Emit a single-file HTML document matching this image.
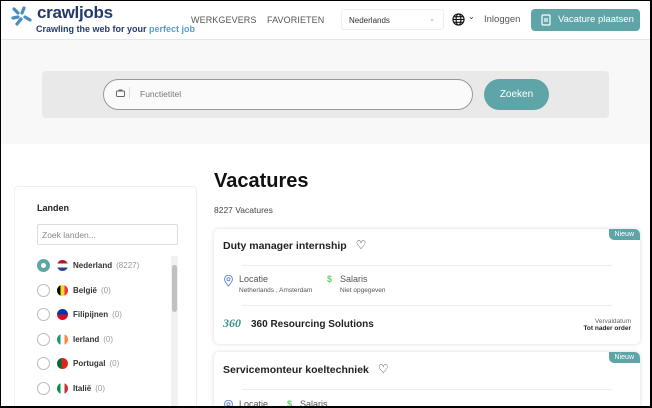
<!DOCTYPE html>
<html style="width:652px;height:408px;overflow:hidden"><head><meta charset="utf-8"><style>
*{box-sizing:border-box;margin:0;padding:0}
body{width:652px;height:408px;overflow:hidden;background:#fff;font-family:"Liberation Sans",sans-serif;color:#222;position:relative}
.frame{position:absolute;left:0;top:0;width:652px;height:408px;border:1px solid #000;border-right-width:2px;border-bottom-width:2px;pointer-events:none;z-index:10}
.abs{position:absolute}
.hdr{left:0;top:0;width:652px;height:40px;border-bottom:1px solid #e6e6e6;background:#fff}
.nav{font-size:9px;color:#555;letter-spacing:.1px}
.band{left:0;top:40px;width:652px;height:104px;background:#f8f8f8}
.sbox{left:42px;top:71px;width:567px;height:47px;background:#e9e9e9;border-radius:4px}
.inp{left:103px;top:79px;width:370px;height:31px;background:#fafafa;border:1px solid #999;border-radius:16px}
.btn{left:484px;top:79px;width:65px;height:31px;background:#5fa5a8;border-radius:16px;color:#fff;font-size:10px;text-align:center;line-height:31px}
.side{left:14px;top:186px;width:183px;height:240px;border:1px solid #eee;border-radius:4px}
.row{position:absolute;left:37px;font-size:8px;font-weight:bold;color:#333;display:flex;align-items:center}
.rad{width:13px;height:13px;border:1px solid #bbb;border-radius:50%;margin-right:7px;background:#fff}
.flag{width:11px;height:11px;border-radius:50%;margin-right:5px;overflow:hidden}
.cnt{font-weight:normal;color:#999;margin-left:4px}
.card{left:214px;width:426px;border-radius:5px;box-shadow:0 0 4px rgba(0,0,0,.15);background:#fff;overflow:hidden}
.tag{position:absolute;right:0;top:0;background:#5fa5a8;color:#fff;font-size:7px;padding:2px 6px;border-radius:0 5px 0 5px}
.ttl{position:absolute;left:9px;font-size:10.5px;font-weight:bold;color:#222}
.sep{position:absolute;left:28px;right:28px;height:1px;background:#eee}
</style></head><body>
<div class="frame"></div>
<div class="abs hdr"></div>
<svg class="abs" style="left:10px;top:6px" width="24" height="20" viewBox="0 0 24 20"><g stroke="#4a8ec0" stroke-width="3.2" stroke-linecap="round"><line x1="4" y1="3" x2="8" y2="7"/><line x1="14" y1="2" x2="12" y2="7"/><line x1="3" y1="12" x2="8" y2="11"/><line x1="11" y1="13" x2="7" y2="18"/><line x1="15" y1="11" x2="20" y2="14"/></g></svg>
<div class="abs" style="left:37px;top:3px;font-size:17px;font-weight:bold;color:#233a6a;letter-spacing:-.3px">crawljobs</div>
<div class="abs" style="left:36px;top:24px;font-size:9px;font-weight:bold;color:#233a6a">Crawling the web for your <span style="color:#5a9cc8">perfect job</span></div>
<div class="abs nav" style="left:191px;top:15px">WERKGEVERS</div>
<div class="abs nav" style="left:267px;top:15px">FAVORIETEN</div>
<div class="abs" style="left:341px;top:9px;width:103px;height:21px;border:1px solid #eee;border-radius:3px;font-size:8px;color:#333;padding:6px 0 0 7px">Nederlands<span style="position:absolute;right:8px;top:5px;color:#999;font-size:7px">⌄</span></div>
<svg class="abs" style="left:452px;top:13px" width="13" height="13" viewBox="0 0 14 14" fill="none" stroke="#111" stroke-width="1.2"><circle cx="7" cy="7" r="6"/><ellipse cx="7" cy="7" rx="2.6" ry="6"/><line x1="1" y1="7" x2="13" y2="7"/><line x1="2" y1="4" x2="12" y2="4"/><line x1="2" y1="10" x2="12" y2="10"/></svg>
<div class="abs" style="left:468px;top:12px;font-size:8px;color:#333">⌄</div>
<div class="abs" style="left:484px;top:14px;font-size:9.5px;color:#555">Inloggen</div>
<div class="abs" style="left:531px;top:9px;width:109px;height:22px;background:#5fa5a8;border-radius:4px;color:#fff;font-size:9.5px;line-height:22px;padding-left:27px;white-space:nowrap">Vacature plaatsen</div>
<svg class="abs" style="left:541px;top:14px" width="10" height="12" viewBox="0 0 10 12" fill="none" stroke="#fff" stroke-width="1.2"><rect x="1" y="1" width="8" height="10" rx="1"/><line x1="4" y1="4" x2="4" y2="8"/><line x1="6" y1="4" x2="6" y2="8"/></svg>
<div class="abs band"></div>
<div class="abs sbox"></div>
<div class="abs inp"></div>
<svg class="abs" style="left:116px;top:89px" width="9" height="8" viewBox="0 0 9 8" fill="none" stroke="#666" stroke-width="1"><rect x="0.5" y="2" width="8" height="5.5" rx="1"/><path d="M3 2V1h3v1"/></svg>
<div class="abs" style="left:129px;top:87px;width:1px;height:12px;background:#ddd"></div>
<div class="abs" style="left:140px;top:89px;font-size:8.5px;color:#777">Functietitel</div>
<div class="abs btn">Zoeken</div>
<div class="abs side"></div>
<div class="abs" style="left:37px;top:203px;font-size:9px;font-weight:bold;color:#222">Landen</div>
<div class="abs" style="left:37px;top:224px;width:141px;height:21px;border:1px solid #ddd;border-radius:2px;font-size:8.5px;color:#888;padding:5px 0 0 4px">Zoek landen...</div>
<div class="abs" style="left:171px;top:256px;width:7px;height:152px;background:#f1f1f1"></div>
<div class="abs" style="left:172px;top:265px;width:5px;height:47px;background:#c1c1c1;border-radius:3px"></div>
<div class="row" style="top:259px"><div class="rad" style="border:4px solid #5fa5a8;background:#fff"></div><div class="flag" style="background:linear-gradient(#ae1c28 33%,#fff 33% 66%,#21468b 66%)"></div>Nederland<span class="cnt">(8227)</span></div>
<div class="row" style="top:284px"><div class="rad"></div><div class="flag" style="background:linear-gradient(90deg,#000 33%,#fdda24 33% 66%,#ef3340 66%)"></div>België<span class="cnt">(0)</span></div>
<div class="row" style="top:308px"><div class="rad"></div><div class="flag" style="background:linear-gradient(#0038a8 50%,#ce1126 50%)"></div>Filipijnen<span class="cnt">(0)</span></div>
<div class="row" style="top:333px"><div class="rad"></div><div class="flag" style="background:linear-gradient(90deg,#169b62 33%,#fff 33% 66%,#ff883e 66%)"></div>Ierland<span class="cnt">(0)</span></div>
<div class="row" style="top:357px"><div class="rad"></div><div class="flag" style="background:linear-gradient(90deg,#046a38 40%,#da291c 40%)"></div>Portugal<span class="cnt">(0)</span></div>
<div class="row" style="top:382px"><div class="rad"></div><div class="flag" style="background:linear-gradient(90deg,#009246 33%,#fff 33% 66%,#ce2b37 66%)"></div>Italië<span class="cnt">(0)</span></div>
<div class="abs" style="left:214px;top:170px;font-size:20px;font-weight:bold;color:#111">Vacatures</div>
<div class="abs" style="left:214px;top:205px;font-size:8.5px;color:#444">8227 Vacatures</div>
<div class="abs card" style="top:229px;height:115px">
<div class="tag">Nieuw</div>
<div class="ttl" style="top:9px">Duty manager internship <span style="font-weight:normal;font-size:12px;margin-left:6px">♡</span></div>
<div class="sep" style="top:36px"></div>
<svg style="position:absolute;left:10px;top:46px" width="9" height="12" viewBox="0 0 9 12" fill="none" stroke="#6b8fd6" stroke-width="1"><path d="M4.5 11C1 7 .5 5.5.5 4.3a4 4 0 018 0C8.5 5.5 8 7 4.5 11z"/><circle cx="4.5" cy="4.3" r="1.5"/></svg>
<div style="position:absolute;left:25px;top:45px;font-size:9px;color:#555">Locatie</div>
<div style="position:absolute;left:25px;top:58px;font-size:6.5px;color:#555">Netherlands , Amsterdam</div>
<div style="position:absolute;left:113px;top:45px;font-size:9px;color:#6c6;font-weight:bold">$</div>
<div style="position:absolute;left:126px;top:45px;font-size:9px;color:#555">Salaris</div>
<div style="position:absolute;left:126px;top:58px;font-size:6.5px;color:#555">Niet opgegeven</div>
<div class="sep" style="top:76px"></div>
<div style="position:absolute;left:9px;top:87px;font-size:12px;font-weight:bold;font-style:italic;color:#3d8f8a;font-family:'Liberation Serif',serif">360</div>
<div style="position:absolute;left:37px;top:90px;font-size:10px;font-weight:bold;color:#222">360 Resourcing Solutions</div>
<div style="position:absolute;right:9px;top:89px;font-size:6.5px;color:#666;text-align:right">Vervaldatum<br><b style="color:#222">Tot nader order</b></div>
</div>
<div class="abs card" style="top:352px;height:70px">
<div class="tag">Nieuw</div>
<div class="ttl" style="top:10px">Servicemonteur koeltechniek <span style="font-weight:normal;font-size:12px;margin-left:6px">♡</span></div>
<div class="sep" style="top:37px"></div>
<svg style="position:absolute;left:10px;top:48px" width="9" height="12" viewBox="0 0 9 12" fill="none" stroke="#6b8fd6" stroke-width="1"><path d="M4.5 11C1 7 .5 5.5.5 4.3a4 4 0 018 0C8.5 5.5 8 7 4.5 11z"/><circle cx="4.5" cy="4.3" r="1.5"/></svg>
<div style="position:absolute;left:25px;top:47px;font-size:9px;color:#555">Locatie</div>
<div style="position:absolute;left:73px;top:47px;font-size:9px;color:#6c6;font-weight:bold">$</div>
<div style="position:absolute;left:86px;top:47px;font-size:9px;color:#555">Salaris</div>
</div>
</body></html>
